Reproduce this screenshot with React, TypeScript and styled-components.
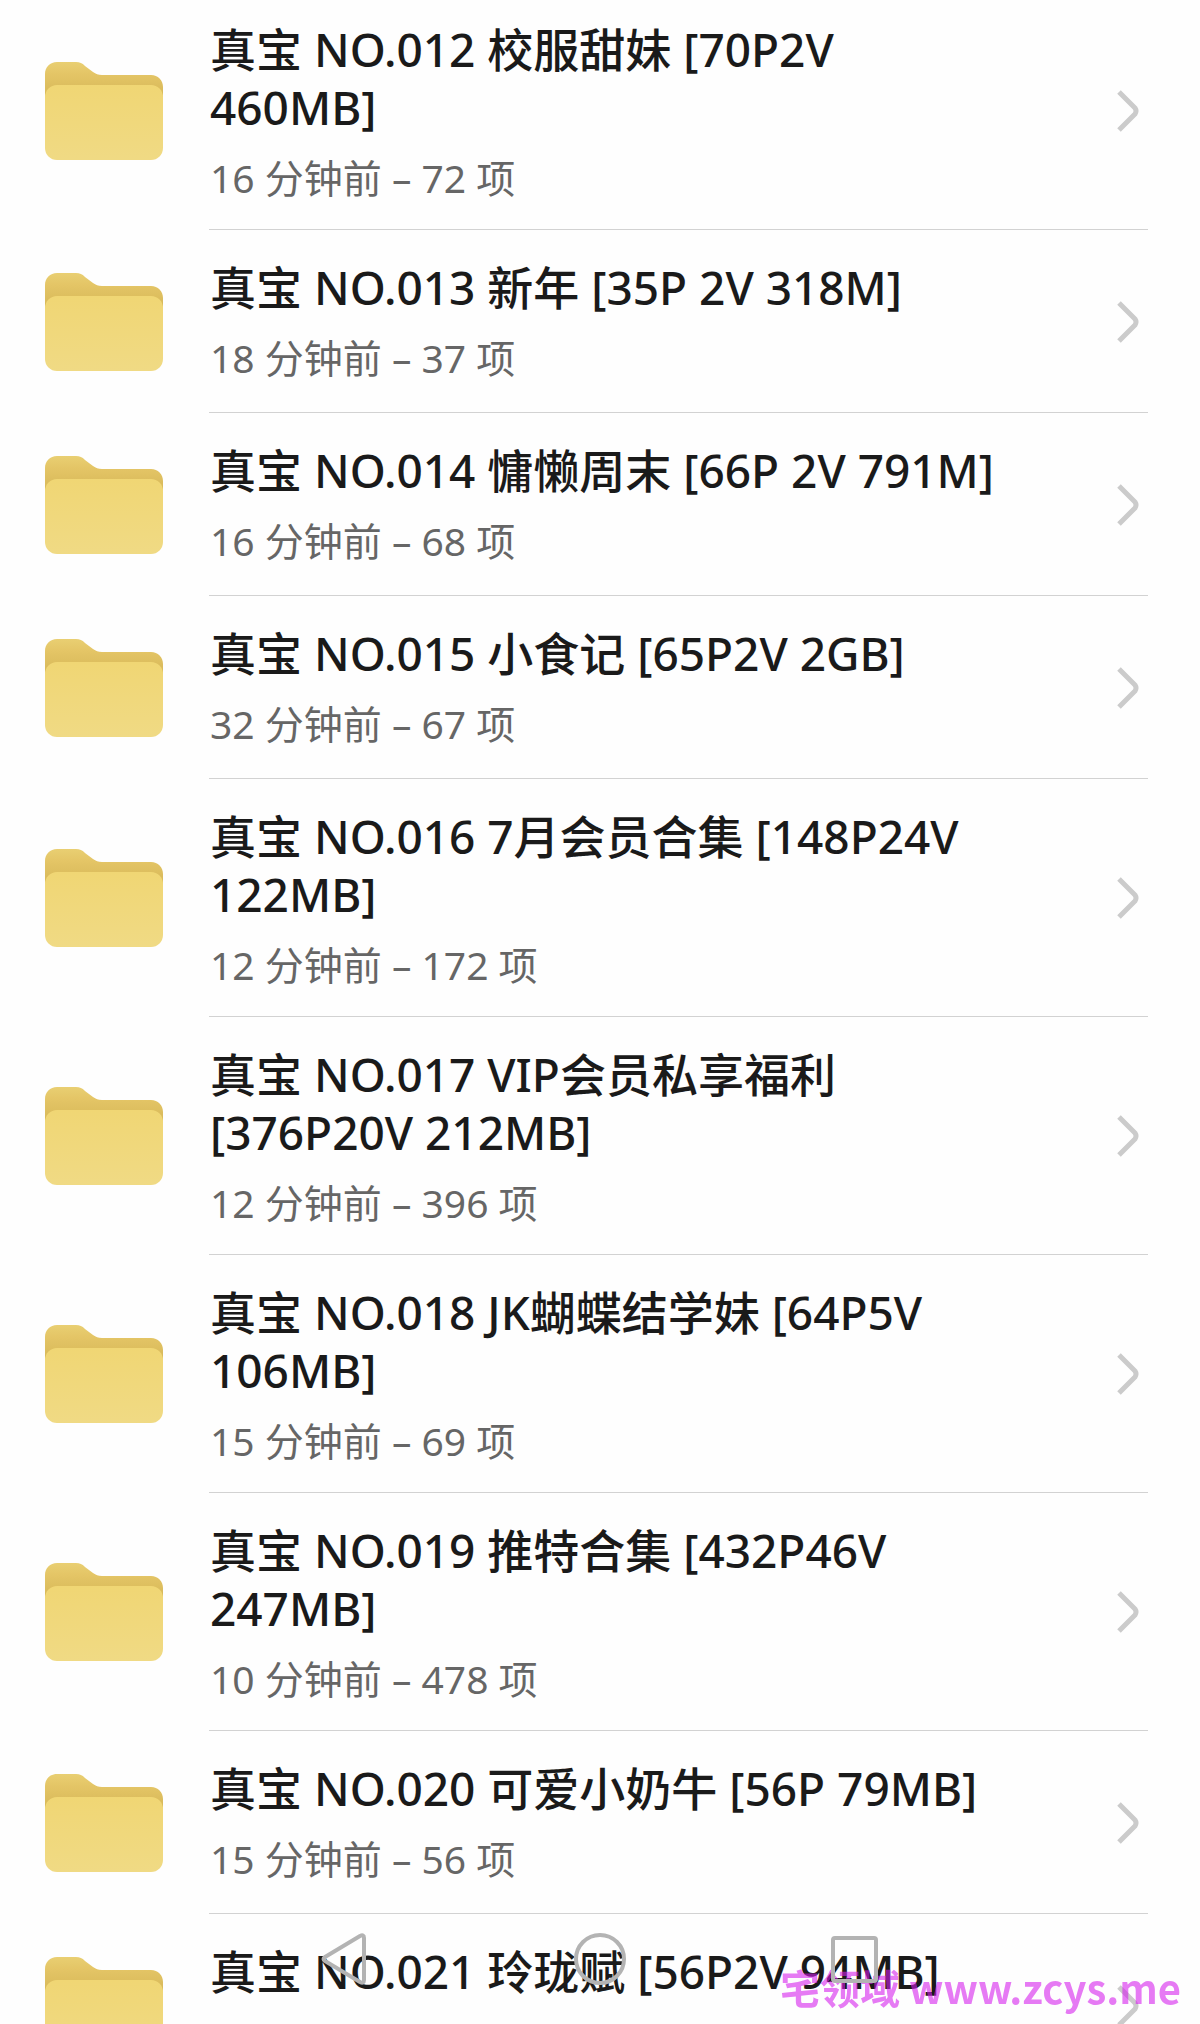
import React from 'react';
import styled, { createGlobalStyle } from 'styled-components';

const GlobalStyle = createGlobalStyle`
  *, *::before, *::after {
    box-sizing: border-box;
  }
  body {
    margin: 0;
    background: #fefefe;
    font-family: "Noto Sans", "Noto Sans CJK SC", sans-serif;
  }
`;

const Screen = styled.main`
  height: 100vh;
  overflow-y: auto;
  scrollbar-width: none;
`;

/* The list is scrolled a little past the top of its first entry. */
const FolderList = styled.ul`
  list-style: none;
  margin: -8px 0 0;
  padding: 0;
`;

const Row = styled.button`
  display: flex;
  align-items: stretch;
  gap: 45px;
  width: 100%;
  min-height: 183px;
  padding: 0 52px 0 45px;
  border: 0;
  background: none;
  color: inherit;
  font: inherit;
  text-align: left;
  cursor: pointer;
`;

const FolderIcon = styled.svg`
  flex: none;
  align-self: center;
  width: 119px;
  height: 98px;
`;

const RowBody = styled.span`
  flex: 1;
  min-width: 0;
  display: flex;
  align-items: center;
  gap: 106px;
  padding: 28px 8px 27px 1px;
  border-bottom: 1px solid #d2d2d2;
`;

const RowText = styled.span`
  flex: 1;
  align-self: flex-start;
  min-width: 0;
  display: flex;
  flex-direction: column;
  gap: 18px;
`;

const Title = styled.span`
  color: #1a1a1a;
  font-size: 46px;
  font-weight: 500;
  line-height: 58px;
`;

const Meta = styled.span`
  color: #666;
  font-size: 39px;
  line-height: 48px;
`;

const Chevron = styled.svg`
  flex: none;
  width: 24px;
  height: 42px;
  fill: none;
  stroke: #cbcbcb;
  stroke-width: 5;
  stroke-linejoin: round;
`;

const Watermark = styled.p`
  position: fixed;
  right: 19px;
  bottom: 9px;
  margin: 0;
  color: rgba(212, 29, 237, 0.59);
  font: 700 40px/56px "Noto Sans CJK SC", sans-serif;
  pointer-events: none;
`;

const NavBar = styled.nav`
  position: fixed;
  left: 18%;
  right: 18%;
  bottom: 0;
  height: 130px;
  display: grid;
  grid-template-columns: repeat(3, 1fr);
`;

const NavButton = styled.button`
  display: flex;
  align-items: center;
  justify-content: center;
  padding: 0;
  border: 0;
  background: none;
  cursor: pointer;

  svg {
    width: 56px;
    height: 56px;
    fill: none;
    stroke: #b3b3b3;
    stroke-width: 4;
    stroke-linejoin: round;
  }
`;

type Folder = { name: string; age: string; count: number };

const folders: Folder[] = [
  { name: '真宝 NO.012 校服甜妹 [70P2V 460MB]', age: '16 分钟前', count: 72 },
  { name: '真宝 NO.013 新年 [35P 2V 318M]', age: '18 分钟前', count: 37 },
  { name: '真宝 NO.014 慵懒周末 [66P 2V 791M]', age: '16 分钟前', count: 68 },
  { name: '真宝 NO.015 小食记 [65P2V 2GB]', age: '32 分钟前', count: 67 },
  { name: '真宝 NO.016 7月会员合集 [148P24V 122MB]', age: '12 分钟前', count: 172 },
  { name: '真宝 NO.017 VIP会员私享福利 [376P20V 212MB]', age: '12 分钟前', count: 396 },
  { name: '真宝 NO.018 JK蝴蝶结学妹 [64P5V 106MB]', age: '15 分钟前', count: 69 },
  { name: '真宝 NO.019 推特合集 [432P46V 247MB]', age: '10 分钟前', count: 478 },
  { name: '真宝 NO.020 可爱小奶牛 [56P 79MB]', age: '15 分钟前', count: 56 },
];

/* The entry at the lower edge of the screen: its second line has not scrolled into view. */
const lastFolder = '真宝 NO.021 玲珑赋 [56P2V 94MB]';

function FolderRow({ name, meta }: { name: string; meta?: string }) {
  return (
    <li>
      <Row type="button">
        <FolderIcon viewBox="0 0 119 98" aria-hidden="true">
          <path
            d="M0 12C0 5 5 0 12 0H31C35 0 37 1 40 4L48 10C51 12 53 13 57 13H106C113 13 118 18 118 25V60H0Z"
            fill="url(#folder-back)"
          />
          <rect x="0" y="23" width="118" height="75" rx="12" fill="url(#folder-front)" />
        </FolderIcon>
        <RowBody>
          <RowText>
            <Title>{name}</Title>
            {meta && <Meta>{meta}</Meta>}
          </RowText>
          <Chevron viewBox="0 0 24 42" aria-hidden="true">
            <path d="M3 2L19 18Q21 21 19 24L3 40" />
          </Chevron>
        </RowBody>
      </Row>
    </li>
  );
}

const Gradients = styled.svg`
  position: absolute;
  width: 0;
  height: 0;
`;

export default function App() {
  return (
    <>
      <GlobalStyle />
      <Gradients aria-hidden="true">
        <defs>
          <linearGradient id="folder-back" gradientUnits="userSpaceOnUse" x1="0" y1="0" x2="0" y2="34">
            <stop offset="0" stopColor="#e9cf72" />
            <stop offset="0.35" stopColor="#e4c566" />
            <stop offset="1" stopColor="#d7b858" />
          </linearGradient>
          <linearGradient id="folder-front" x1="0" y1="0" x2="0" y2="1">
            <stop offset="0" stopColor="#f0d674" />
            <stop offset="1" stopColor="#f0da84" />
          </linearGradient>
        </defs>
      </Gradients>
      <Screen>
        <FolderList>
          {folders.map(({ name, age, count }) => (
            <FolderRow key={name} name={name} meta={`${age} – ${count} 项`} />
          ))}
          <FolderRow name={lastFolder} />
        </FolderList>
      </Screen>
      <Watermark>宅领域 www.zcys.me</Watermark>
      <NavBar>
        <NavButton type="button" aria-label="返回">
          <svg viewBox="0 0 56 56">
            <path d="M9 26Q6 28 9 30L44 51Q48 53 48 49V7Q48 3 44 5Z" />
          </svg>
        </NavButton>
        <NavButton type="button" aria-label="主页">
          <svg viewBox="0 0 56 56">
            <circle cx="28" cy="28" r="24" />
          </svg>
        </NavButton>
        <NavButton type="button" aria-label="最近任务">
          <svg viewBox="0 0 56 56">
            <rect x="5" y="7" width="43" height="43" rx="2" />
          </svg>
        </NavButton>
      </NavBar>
    </>
  );
}
